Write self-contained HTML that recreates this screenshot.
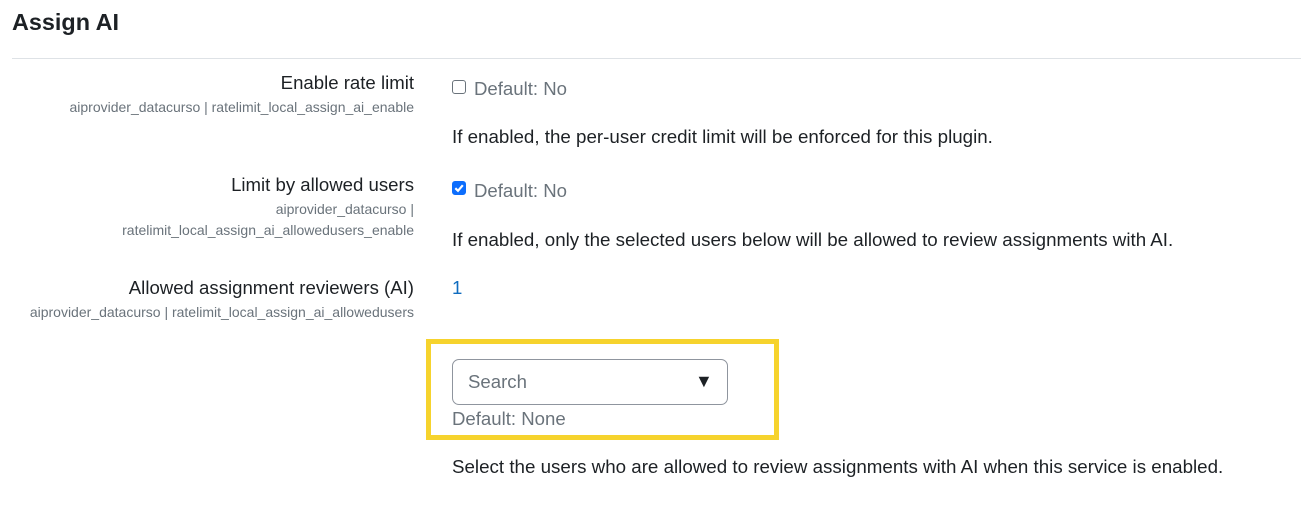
<!DOCTYPE html>
<html><head><meta charset="utf-8"><style>
body{margin:0;width:1301px;height:505px;background:#fff;font-family:"Liberation Sans",sans-serif;color:#1d2125;position:relative;overflow:hidden}
.a{position:absolute;white-space:nowrap}
.h{left:12px;top:9px;font-size:23.4px;font-weight:bold}
.hr{left:12px;top:58px;width:1289px;height:1px;background:#dee2e6}
.lbl{right:887px;font-size:18.6px;text-align:right}
.sm{right:887px;font-size:14px;color:#6a737b;text-align:right}
.def{font-size:18.6px;color:#6a737b}
.desc{left:452px;font-size:18.75px}
.cb{position:absolute;left:452px;width:13px;height:13px;border:1px solid #6a737b;border-radius:3px;box-sizing:border-box}
.cbc{background:#0d6efd;border-color:#0d6efd}
</style></head><body>
<div class="a h">Assign AI</div>
<div class="a hr"></div>

<div class="a lbl" style="top:72px">Enable rate limit</div>
<div class="a sm" style="top:99px">aiprovider_datacurso | ratelimit_local_assign_ai_enable</div>
<div class="cb" style="top:80px;width:14px;height:14px"></div>
<div class="a def" style="left:474px;top:78px">Default: No</div>
<div class="a desc" style="top:126px">If enabled, the per-user credit limit will be enforced for this plugin.</div>

<div class="a lbl" style="top:174px">Limit by allowed users</div>
<div class="a sm" style="top:201px">aiprovider_datacurso |</div>
<div class="a sm" style="top:222px">ratelimit_local_assign_ai_allowedusers_enable</div>
<div class="cb cbc" style="top:181px;width:14px;height:14px"><svg width="14" height="14" viewBox="0 0 14 14" style="position:absolute;left:-1px;top:-1px"><path d="M3.3 7.2 L6 9.8 L10.8 4.2" stroke="#fff" stroke-width="2.2" fill="none"/></svg></div>
<div class="a def" style="left:474px;top:180px">Default: No</div>
<div class="a desc" style="top:229px">If enabled, only the selected users below will be allowed to review assignments with AI.</div>

<div class="a lbl" style="top:277px">Allowed assignment reviewers (AI)</div>
<div class="a sm" style="top:304px">aiprovider_datacurso | ratelimit_local_assign_ai_allowedusers</div>
<div class="a" style="left:452px;top:277px;font-size:18.6px;color:#0f6cbf">1</div>

<div class="a" style="left:426px;top:339px;width:353px;height:101px;border:5px solid #f6d32d;box-sizing:border-box"></div>
<div class="a" style="left:452px;top:359px;width:276px;height:46px;border:1px solid #8f959e;border-radius:7px;box-sizing:border-box"></div>
<div class="a def" style="left:468px;top:371px">Search</div>
<div class="a" style="left:695px;top:371px;font-size:18px;color:#1d2125">▼</div>
<div class="a def" style="left:452px;top:408px">Default: None</div>

<div class="a desc" style="top:456px">Select the users who are allowed to review assignments with AI when this service is enabled.</div>
</body></html>
